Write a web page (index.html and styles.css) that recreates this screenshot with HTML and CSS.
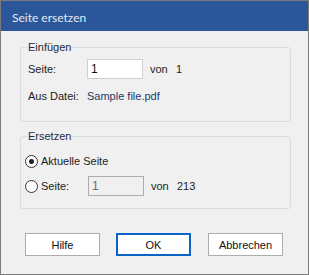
FILE: index.html
```html
<!DOCTYPE html>
<html lang="de">
<head>
<meta charset="utf-8">
<title>Seite ersetzen</title>
<link rel="stylesheet" href="styles.css">
</head>
<body>
<div class="window">
  <div class="titlebar">Seite ersetzen</div>
  <div class="content">
    <fieldset class="group group-insert">
      <legend>Einfügen</legend>
      <div class="row row-page">
        <span class="label">Seite:</span>
        <span class="input">1</span>
        <span class="von">von</span><span class="num">1</span>
      </div>
      <div class="row row-file">
        <span class="label">Aus Datei:</span>
        <span class="file">Sample file.pdf</span>
      </div>
    </fieldset>
    <fieldset class="group group-replace">
      <legend>Ersetzen</legend>
      <div class="row radio-row first">
        <span class="radio checked"></span><span class="radio-text">Aktuelle Seite</span>
      </div>
      <div class="row radio-row second">
        <span class="radio"></span><span class="radio-text radio-label">Seite:</span>
        <span class="input disabled">1</span>
        <span class="von">von</span><span class="num">213</span>
      </div>
    </fieldset>
    <div class="buttons">
      <span class="btn">Hilfe</span>
      <span class="btn default">OK</span>
      <span class="btn cancel">Abbrechen</span>
    </div>
  </div>
</div>
</body>
</html>
```
FILE: styles.css
```css
html, body {
  margin: 0;
  padding: 0;
  background: #f0f0f0;
}
.window {
  width: 309px;
  height: 275px;
  box-sizing: border-box;
  border: 1px solid #7a7a7a;
  background: #f0f0f0;
  font-family: "Liberation Sans", Arial, sans-serif;
  font-size: 11px;
  color: #222;
  overflow: hidden;
}
.titlebar {
  height: 30px;
  box-sizing: border-box;
  background: #2b579a;
  color: #e6e8f0;
  font-family: "Lato", "Open Sans", sans-serif;
  font-size: 12px;
  line-height: 14px;
  padding: 10px 0 0 11px;
}
.content {
  padding: 0 0 0 19px;
}
.group {
  margin: 0;
  padding: 0;
  min-width: 0;
  width: 271px;
  box-sizing: border-box;
  border: 1px solid #dcdcdc;
  border-radius: 3px;
}
.group legend {
  margin-left: 6px;
  padding: 0 1px;
  line-height: 14px;
  color: #252a3a;
}
.group-insert {
  margin-top: 9px;
  padding-bottom: 18px;
}
.group-replace {
  margin-top: 7px;
  padding-bottom: 12px;
}
.row {
  display: flex;
  align-items: center;
  line-height: 14px;
}
.group-insert .row {
  padding-left: 7px;
}
.row-page {
  margin-top: 5px;
  height: 20px;
}
.row-file {
  margin-top: 10px;
  height: 14px;
}
.label {
  width: 59px;
  flex: none;
}
.input {
  width: 56px;
  height: 20px;
  box-sizing: border-box;
  border: 1px solid #cfcfcf;
  background: #fff;
  padding-left: 3px;
  line-height: 18px;
  font-size: 12px;
  color: #111;
  flex: none;
}
.input.disabled {
  background: #f0f0f0;
  border-color: #adadad;
  color: #6d6d6d;
}
.von {
  margin-left: 7px;
  width: 26px;
  flex: none;
}
.file {
  color: #1f3a66;
}
.group-replace .row {
  padding-left: 4px;
  height: 20px;
}
.radio-row.first {
  margin-top: 8px;
}
.radio-row.second {
  margin-top: 5px;
}
.radio {
  width: 13px;
  height: 13px;
  box-sizing: border-box;
  border: 1px solid #333;
  border-radius: 50%;
  background: #fff;
  display: flex;
  align-items: center;
  justify-content: center;
  flex: none;
}
.radio.checked::after {
  content: "";
  width: 5px;
  height: 5px;
  border-radius: 50%;
  background: #222;
}
.radio-text {
  margin-left: 3px;
}
.radio-label {
  width: 47px;
  flex: none;
}
.buttons {
  display: flex;
  margin-top: 24px;
  padding-left: 5px;
  gap: 16px;
}
.btn {
  width: 75px;
  height: 23px;
  box-sizing: border-box;
  border: 1px solid #adadad;
  background: #fff;
  color: #111;
  display: flex;
  align-items: center;
  justify-content: center;
}
.btn.default {
  border: 2px solid #0a64c8;
}
.btn.cancel {
  margin-left: 1px;
}
```
